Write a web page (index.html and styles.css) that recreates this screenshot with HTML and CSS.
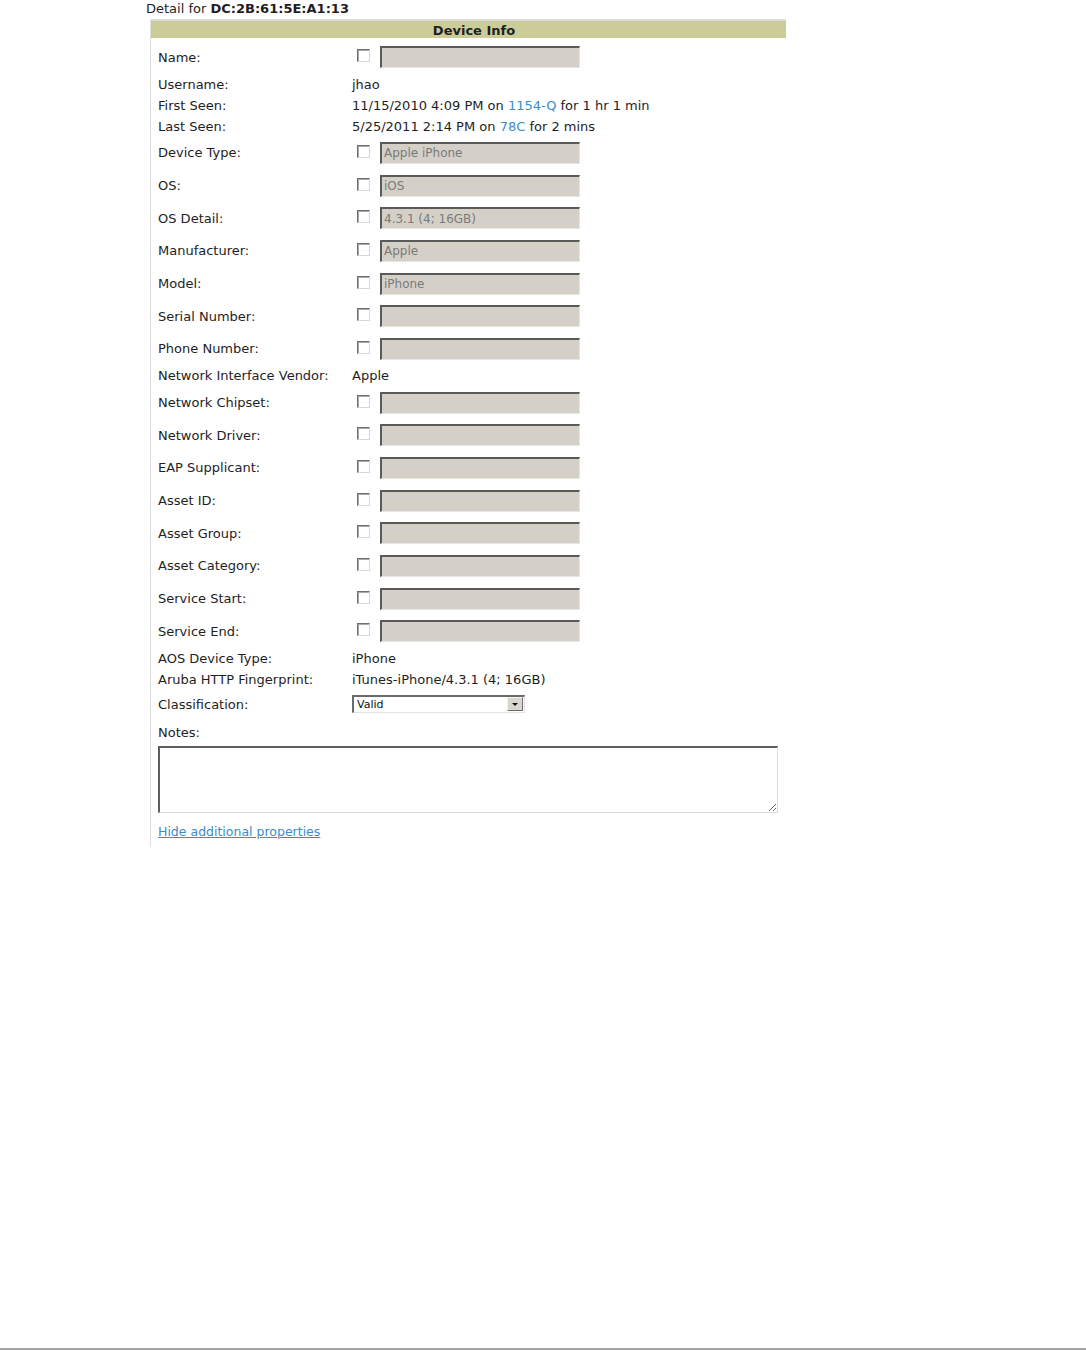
FILE: index.html
```
<!DOCTYPE html>
<html lang="en">
<head>
  <meta charset="UTF-8" />
  <meta name="viewport" content="width=device-width, initial-scale=1.0" />
  <title>Device Detail</title>
  <link rel="stylesheet" href="styles.css">
</head>
<body>
  <!-- ============================
       Device Detail
       ============================ -->
  <main class="detail">
    <h1 class="detail-title">Detail for <b>DC:2B:61:5E:A1:13</b></h1>

    <section class="panel">
      <div class="panel-head">Device Info</div>

      <div class="props">
        <div class="row edit">
          <span class="label">Name:</span>
          <span class="controls"><input type="checkbox" class="chk"><input type="text" class="field" value="" disabled></span>
        </div>
        <div class="row">
          <span class="label">Username:</span>
          <span class="value">jhao</span>
        </div>
        <div class="row">
          <span class="label">First Seen:</span>
          <span class="value">11/15/2010 4:09 PM on <a href="#">1154-Q</a> for 1 hr 1 min</span>
        </div>
        <div class="row">
          <span class="label">Last Seen:</span>
          <span class="value">5/25/2011 2:14 PM on <a href="#">78C</a> for 2 mins</span>
        </div>
        <div class="row edit">
          <span class="label">Device Type:</span>
          <span class="controls"><input type="checkbox" class="chk"><input type="text" class="field" value="Apple iPhone" disabled></span>
        </div>
        <div class="row edit">
          <span class="label">OS:</span>
          <span class="controls"><input type="checkbox" class="chk"><input type="text" class="field" value="iOS" disabled></span>
        </div>
        <div class="row edit">
          <span class="label">OS Detail:</span>
          <span class="controls"><input type="checkbox" class="chk"><input type="text" class="field" value="4.3.1 (4; 16GB)" disabled></span>
        </div>
        <div class="row edit">
          <span class="label">Manufacturer:</span>
          <span class="controls"><input type="checkbox" class="chk"><input type="text" class="field" value="Apple" disabled></span>
        </div>
        <div class="row edit">
          <span class="label">Model:</span>
          <span class="controls"><input type="checkbox" class="chk"><input type="text" class="field" value="iPhone" disabled></span>
        </div>
        <div class="row edit">
          <span class="label">Serial Number:</span>
          <span class="controls"><input type="checkbox" class="chk"><input type="text" class="field" value="" disabled></span>
        </div>
        <div class="row edit">
          <span class="label">Phone Number:</span>
          <span class="controls"><input type="checkbox" class="chk"><input type="text" class="field" value="" disabled></span>
        </div>
        <div class="row">
          <span class="label">Network Interface Vendor:</span>
          <span class="value">Apple</span>
        </div>
        <div class="row edit">
          <span class="label">Network Chipset:</span>
          <span class="controls"><input type="checkbox" class="chk"><input type="text" class="field" value="" disabled></span>
        </div>
        <div class="row edit">
          <span class="label">Network Driver:</span>
          <span class="controls"><input type="checkbox" class="chk"><input type="text" class="field" value="" disabled></span>
        </div>
        <div class="row edit">
          <span class="label">EAP Supplicant:</span>
          <span class="controls"><input type="checkbox" class="chk"><input type="text" class="field" value="" disabled></span>
        </div>
        <div class="row edit">
          <span class="label">Asset ID:</span>
          <span class="controls"><input type="checkbox" class="chk"><input type="text" class="field" value="" disabled></span>
        </div>
        <div class="row edit">
          <span class="label">Asset Group:</span>
          <span class="controls"><input type="checkbox" class="chk"><input type="text" class="field" value="" disabled></span>
        </div>
        <div class="row edit">
          <span class="label">Asset Category:</span>
          <span class="controls"><input type="checkbox" class="chk"><input type="text" class="field" value="" disabled></span>
        </div>
        <div class="row edit">
          <span class="label">Service Start:</span>
          <span class="controls"><input type="checkbox" class="chk"><input type="text" class="field" value="" disabled></span>
        </div>
        <div class="row edit">
          <span class="label">Service End:</span>
          <span class="controls"><input type="checkbox" class="chk"><input type="text" class="field" value="" disabled></span>
        </div>
        <div class="row">
          <span class="label">AOS Device Type:</span>
          <span class="value">iPhone</span>
        </div>
        <div class="row">
          <span class="label">Aruba HTTP Fingerprint:</span>
          <span class="value">iTunes-iPhone/4.3.1 (4; 16GB)</span>
        </div>
        <div class="row choice">
          <span class="label">Classification:</span>
          <span class="controls">
            <span class="select-wrap">
              <select class="select">
                <option>Valid</option>
                <option>Suspected Rogue</option>
                <option>Rogue</option>
              </select>
              <span class="select-btn"></span>
            </span>
          </span>
        </div>
        <div class="row notes-label">
          <span class="label">Notes:</span>
        </div>
      </div>

      <textarea class="notes"></textarea>

      <a href="#" class="more-link">Hide additional properties</a>
    </section>
  </main>

  <div class="page-end"></div>
</body>
</html>
```

FILE: styles.css
```
/* ============================
   Basic Reset
   ============================ */
* {
  margin: 0;
  padding: 0;
  box-sizing: border-box;
}

html,
body {
  height: 100%;
}

body {
  display: flex;
  flex-direction: column;
  font-family: "DejaVu Sans", Verdana, sans-serif;
  font-size: 13px;
  color: #1e1e24;
  background: #fff;
}

a {
  color: #3b8ccc;
  text-decoration: none;
}

/* ============================
   Detail Panel
   ============================ */
.detail {
  margin-left: 146px;
}

.detail-title {
  font-size: 13px;
  font-weight: normal;
  line-height: 17px;
}

.panel {
  margin: 2px 0 0 4px;
  width: 636px;
  border-left: 1px solid #dedede;
  padding-bottom: 7px;
}

.panel-head {
  border-top: 2px solid #dcdcdc;
  background-color: #cccc99;
  height: 19px;
  line-height: 18px;
  padding-top: 1px;
  text-align: center;
  font-weight: bold;
  padding-left: 11px;
}

.props {
  padding: 3px 0 0 7px;
}

.row {
  display: flex;
  align-items: center;
  height: 21px;
}

.row.edit {
  height: 32.67px;
}

.row.choice {
  height: 29px;
}

.row.notes-label {
  margin-top: 3px;
}

.label {
  width: 194px;
  flex-shrink: 0;
}

.value {
  white-space: nowrap;
}

.controls {
  display: flex;
  align-items: center;
}

/* ============================
   Form Controls (classic look)
   ============================ */
.chk {
  appearance: none;
  -webkit-appearance: none;
  width: 13px;
  height: 13px;
  margin: 0 10px 3px 5px;
  background: #fff;
  border: 1px solid;
  border-color: #6e6e6e #d8d8d8 #d8d8d8 #6e6e6e;
  box-shadow: inset 1px 1px 0 #a8a8a8;
}

.field {
  width: 200px;
  height: 22px;
  background: #d4d0c8;
  border-style: solid;
  border-width: 2px 1px 1px 2px;
  border-color: #5a5a5a #e6e6e6 #e6e6e6 #5a5a5a;
  padding: 0 2px;
  font-family: "DejaVu Sans", Verdana, sans-serif;
  font-size: 12px;
  color: #7a7a7a;
}

.field:disabled {
  color: #7a7a7a;
  -webkit-text-fill-color: #7a7a7a;
  opacity: 1;
}

.select-wrap {
  position: relative;
  display: inline-block;
}

.select {
  appearance: none;
  -webkit-appearance: none;
  width: 173px;
  height: 18px;
  background: #fff;
  border-style: solid;
  border-width: 2px 1px 1px 2px;
  border-color: #6a6a6a #e2e2e2 #e2e2e2 #6a6a6a;
  padding: 0 0 0 3px;
  font-family: "DejaVu Sans", Verdana, sans-serif;
  font-size: 11px;
  color: #111;
  border-radius: 0;
}

/* drop-down button drawn over the select */
.select-btn {
  position: absolute;
  top: 2px;
  right: 2px;
  width: 16px;
  height: 14px;
  background: #d9d6cf;
  border: 1px solid;
  border-color: #f4f4f4 #6e6e6e #6e6e6e #f4f4f4;
  pointer-events: none;
}

.select-btn::after {
  content: "";
  position: absolute;
  left: 4px;
  top: 5px;
  border-left: 3px solid transparent;
  border-right: 3px solid transparent;
  border-top: 3px solid #111;
}

.notes {
  display: block;
  width: 620px;
  height: 67px;
  margin: 3px 0 0 7px;
  border-style: solid;
  border-width: 2px 1px 1px 2px;
  border-color: #5e5e5e #dcdcdc #dcdcdc #5e5e5e;
  font-family: "DejaVu Sans", Verdana, sans-serif;
  font-size: 12px;
}

.more-link {
  display: inline-block;
  margin: 11px 0 0 7px;
  line-height: 16px;
  font-size: 12.5px;
  text-decoration: underline;
}

/* ============================
   Page bottom edge
   ============================ */
.page-end {
  margin-top: auto;
  height: 2px;
  background-color: #a3a3a3;
}
```
